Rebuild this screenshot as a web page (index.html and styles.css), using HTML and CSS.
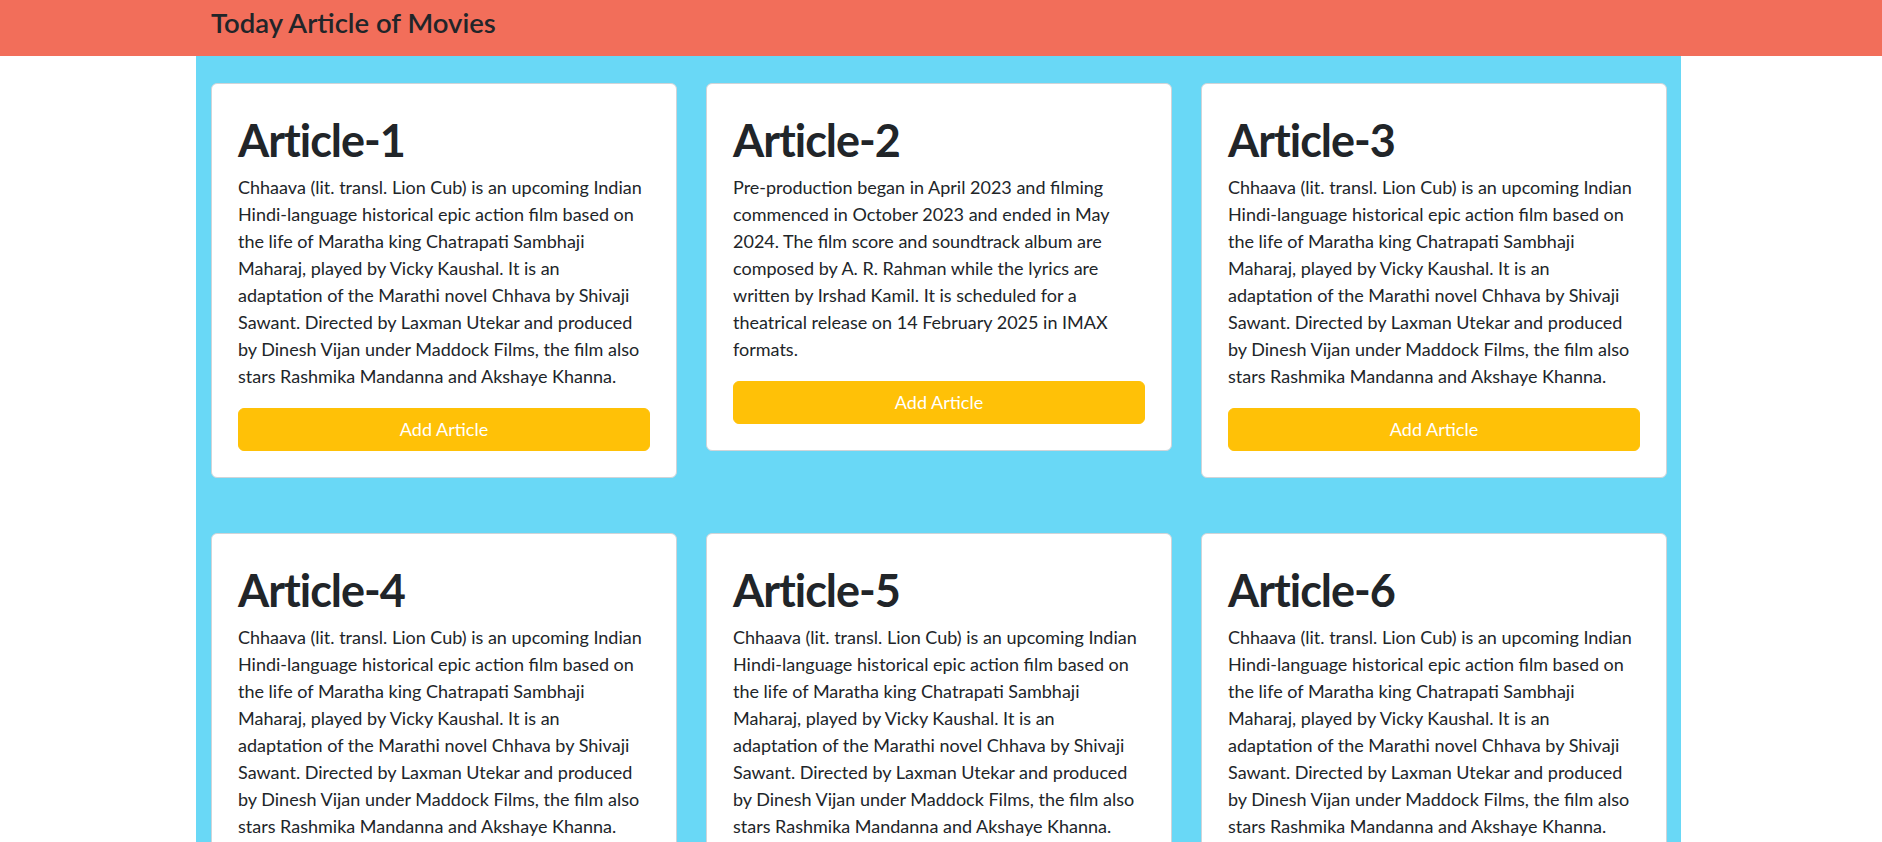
FILE: index.html
```
<!DOCTYPE html>
<html lang="en">
<head>
<meta charset="utf-8">
<title>Today Article of Movies</title>
<link rel="stylesheet" href="styles.css">
</head>
<body>
<header class="topbar">
  <div class="wrap">
    <h2 class="brand">Today Article of Movies</h2>
  </div>
</header>
<main class="wrap board">
  <div class="grid">
    <article class="card">
      <h1 class="card-title">Article-1</h1>
      <p class="card-text">Chhaava (lit. transl. Lion Cub) is an upcoming Indian Hindi-language historical epic action film based on the life of Maratha king Chatrapati Sambhaji Maharaj, played by Vicky Kaushal. It is an adaptation of the Marathi novel Chhava by Shivaji Sawant. Directed by Laxman Utekar and produced by Dinesh Vijan under Maddock Films, the film also stars Rashmika Mandanna and Akshaye Khanna.</p>
      <button class="btn">Add Article</button>
    </article>
    <article class="card">
      <h1 class="card-title">Article-2</h1>
      <p class="card-text">Pre-production began in April 2023 and filming commenced in October 2023 and ended in May 2024. The film score and soundtrack album are composed by A. R. Rahman while the lyrics are written by Irshad Kamil. It is scheduled for a theatrical release on 14 February 2025 in IMAX formats.</p>
      <button class="btn">Add Article</button>
    </article>
    <article class="card">
      <h1 class="card-title">Article-3</h1>
      <p class="card-text">Chhaava (lit. transl. Lion Cub) is an upcoming Indian Hindi-language historical epic action film based on the life of Maratha king Chatrapati Sambhaji Maharaj, played by Vicky Kaushal. It is an adaptation of the Marathi novel Chhava by Shivaji Sawant. Directed by Laxman Utekar and produced by Dinesh Vijan under Maddock Films, the film also stars Rashmika Mandanna and Akshaye Khanna.</p>
      <button class="btn">Add Article</button>
    </article>
    <article class="card">
      <h1 class="card-title">Article-4</h1>
      <p class="card-text">Chhaava (lit. transl. Lion Cub) is an upcoming Indian Hindi-language historical epic action film based on the life of Maratha king Chatrapati Sambhaji Maharaj, played by Vicky Kaushal. It is an adaptation of the Marathi novel Chhava by Shivaji Sawant. Directed by Laxman Utekar and produced by Dinesh Vijan under Maddock Films, the film also stars Rashmika Mandanna and Akshaye Khanna.</p>
      <button class="btn">Add Article</button>
    </article>
    <article class="card">
      <h1 class="card-title">Article-5</h1>
      <p class="card-text">Chhaava (lit. transl. Lion Cub) is an upcoming Indian Hindi-language historical epic action film based on the life of Maratha king Chatrapati Sambhaji Maharaj, played by Vicky Kaushal. It is an adaptation of the Marathi novel Chhava by Shivaji Sawant. Directed by Laxman Utekar and produced by Dinesh Vijan under Maddock Films, the film also stars Rashmika Mandanna and Akshaye Khanna.</p>
      <button class="btn">Add Article</button>
    </article>
    <article class="card">
      <h1 class="card-title">Article-6</h1>
      <p class="card-text">Chhaava (lit. transl. Lion Cub) is an upcoming Indian Hindi-language historical epic action film based on the life of Maratha king Chatrapati Sambhaji Maharaj, played by Vicky Kaushal. It is an adaptation of the Marathi novel Chhava by Shivaji Sawant. Directed by Laxman Utekar and produced by Dinesh Vijan under Maddock Films, the film also stars Rashmika Mandanna and Akshaye Khanna.</p>
      <button class="btn">Add Article</button>
    </article>
  </div>
</main>
</body>
</html>
```
FILE: styles.css
```
* {
  box-sizing: border-box;
}

html, body {
  margin: 0;
  padding: 0;
  background: #ffffff;
}

body {
  font-family: "Lato", "Liberation Sans", sans-serif;
  font-size: 18px;
  line-height: 27px;
  color: #212529;
  min-height: 842px;
  display: flex;
  flex-direction: column;
}

.wrap {
  width: 1485px;
  margin-left: calc(50% - 745px);
}

.topbar {
  background: #f26e5a;
  height: 56px;
}

.topbar .wrap {
  padding: 6px 15px 0 15px;
}

.brand {
  margin: 0;
  font-size: 27.5px;
  font-weight: 600;
  line-height: 33px;
  color: #212529;
}

.board {
  flex: 1;
  background: #69d8f6;
  padding: 27px 14px 40px 15px;
}

.grid {
  display: grid;
  grid-template-columns: repeat(3, 466px);
  column-gap: 29px;
  row-gap: 55px;
  align-items: start;
}

.card {
  background: #ffffff;
  border: 1px solid #d0d4d8;
  border-radius: 6px;
  padding: 28px 26px 26px 26px;
  display: flex;
  flex-direction: column;
}

.card-title {
  margin: 1px 0 7px 0;
  font-size: 45px;
  font-weight: 700;
  letter-spacing: -1px;
  line-height: 54px;
  color: #212529;
}

.card-text {
  margin: 0 3px 18px 0;
}

.btn {
  font-family: inherit;
  font-size: 18px;
  line-height: 27px;
  color: #ffffff;
  background: #ffc107;
  border: 1px solid #ffc107;
  border-radius: 6px;
  padding: 7px 12px;
  width: 100%;
  cursor: pointer;
}
```
